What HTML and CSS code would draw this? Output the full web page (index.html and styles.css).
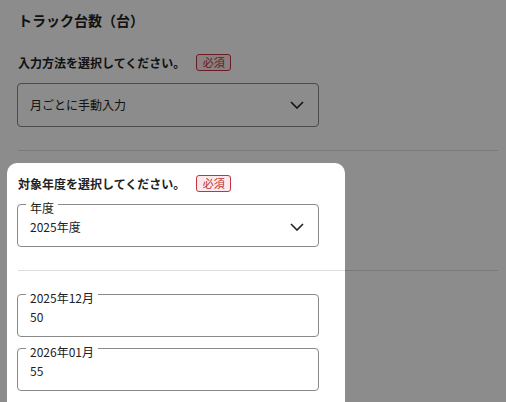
FILE: index.html
```html
<!DOCTYPE html>
<html lang="ja">
<head>
<meta charset="utf-8">
<link rel="stylesheet" href="styles.css">
</head>
<body>
<main class="page">
  <h2 class="title">トラック台数（台）</h2>

  <section class="block">
    <div class="label-row">
      <span class="label">入力方法を選択してください。</span>
      <span class="badge">必須</span>
    </div>
    <div class="select">
      <span class="value">月ごとに手動入力</span>
      <svg class="chev" width="14" height="8" viewBox="0 0 14 8"><path d="M1 1l6 6 6-6" fill="none" stroke="#222" stroke-width="1.6"/></svg>
    </div>
  </section>

  <hr class="divider">

  <section class="block">
    <div class="label-row">
      <span class="label">対象年度を選択してください。</span>
      <span class="badge">必須</span>
    </div>
    <fieldset class="field">
      <legend class="legend">年度</legend>
      <div class="field-body">
        <span class="value">2025年度</span>
        <svg class="chev" width="14" height="8" viewBox="0 0 14 8"><path d="M1 1l6 6 6-6" fill="none" stroke="#222" stroke-width="1.6"/></svg>
      </div>
    </fieldset>
  </section>

  <hr class="divider">

  <section class="block months">
    <fieldset class="field">
      <legend class="legend">2025年12月</legend>
      <div class="field-body"><span class="value">50</span></div>
    </fieldset>
    <fieldset class="field">
      <legend class="legend">2026年01月</legend>
      <div class="field-body"><span class="value">55</span></div>
    </fieldset>
  </section>
</main>
<div class="spotlight"></div>
</body>
</html>
```

FILE: styles.css
```css
html, body {
  margin: 0;
  padding: 0;
  background: #fff;
  overflow: hidden;
  height: 100%;
}
body {
  font-family: "Noto Sans CJK JP", "Noto Sans", sans-serif;
  color: #222;
}
.page {
  padding: 10px 8px 0 17px;
  display: flex;
  flex-direction: column;
  height: 392px;
  overflow: hidden;
}
.title {
  margin: 0 0 0 1px;
  font-size: 14px;
  line-height: 20px;
  font-weight: 700;
}
.block {
  display: flex;
  flex-direction: column;
  width: 302px;
  flex-shrink: 0;
}
.label-row {
  display: flex;
  align-items: center;
  height: 17px;
  margin-left: 1px;
}
.label {
  font-size: 12px;
  font-weight: 700;
  line-height: 17px;
}
.badge {
  margin-left: 11px;
  box-sizing: border-box;
  height: 17px;
  width: 35px;
  border: 1px solid #c4343e;
  border-radius: 3px;
  background: #fde9eb;
  color: #b8303a;
  font-size: 11px;
  line-height: 15px;
  text-align: center;
}
.page > .block:nth-of-type(1) { margin-top: 24px; }
.select {
  margin-top: 12px;
  box-sizing: border-box;
  height: 44px;
  border: 1px solid #8a8a8a;
  border-radius: 4px;
  display: flex;
  align-items: center;
  justify-content: space-between;
  padding: 0 14px 0 12px;
}
.value {
  font-size: 12px;
  line-height: 20px;
}
.chev { display: block; }
.divider {
  border: 0;
  height: 1px;
  background: #dcdcdc;
  margin: 23px 0 0 1px;
  width: 480px;
  flex-shrink: 0;
}
.divider + .block { margin-top: 24px; }
.field {
  margin: 2px 0 0 0;
  border: 1px solid #8a8a8a;
  border-radius: 4px;
  padding: 0 14px 9px 8px;
  min-width: 0;
}
.legend {
  padding: 8px 4px 0;
  font-size: 12px;
  line-height: 12px;
  color: #222;
}
.field-body {
  display: flex;
  align-items: center;
  justify-content: space-between;
  padding: 3px 0 0 4px;
}
.page > .months { margin-top: 11px; }
.months .field + .field { margin-top: 1px; }
.spotlight {
  position: absolute;
  left: 7px;
  top: 163px;
  width: 338px;
  height: 239px;
  border-radius: 10px 10px 0 0;
  box-shadow: 0 0 0 1200px rgba(0, 0, 0, 0.45);
  pointer-events: none;
}
```
